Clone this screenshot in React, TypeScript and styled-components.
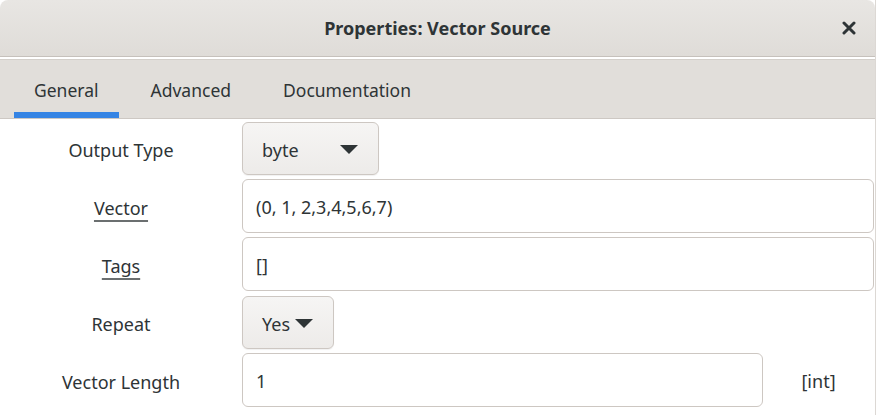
import React from "react";
import styled, { createGlobalStyle } from "styled-components";

const Global = createGlobalStyle`
  html, body { margin: 0; padding: 0; background: #ffffff; }
  body { font-family: "Noto Sans", "Open Sans", sans-serif; color: #2e3436; }
`;

const Window = styled.div`
  width: 875px;
  height: 415px;
  border-right: 1px solid #dcd8d4;
  background: #ffffff;
  display: flex;
  flex-direction: column;
  overflow: hidden;
`;

const TitleBar = styled.div`
  height: 56px;
  flex: none;
  border-radius: 8px 8px 0 0;
  background: linear-gradient(#e8e6e3, #dfdcd8);
  border-bottom: 1px solid #c6c1bc;
  display: flex;
  align-items: center;
  justify-content: center;
  position: relative;
`;

const Title = styled.div`
  font-weight: 700;
  font-size: 18px;
  color: #2e3436;
  padding-bottom: 1px;
`;

const CloseButton = styled.div`
  position: absolute;
  right: 19px;
  top: 21px;
  width: 14px;
  height: 14px;
  display: flex;
`;

const TabBar = styled.div`
  margin-top: 2px;
  height: 58px;
  flex: none;
  background: #e1deda;
  border-top: 1px solid #d3cfca;
  border-bottom: 1px solid #cdc8c3;
  display: flex;
  align-items: stretch;
  padding-left: 14px;
`;

const Tab = styled.div<{ $active?: boolean }>`
  display: flex;
  align-items: center;
  padding: 2px 20px 0;
  margin-right: 12px;
  font-size: 17.5px;
  color: #2e3436;
  box-shadow: ${(p) => (p.$active ? "inset 0 -6px 0 #3584e4" : "none")};
`;

const Content = styled.div`
  padding-top: 2px;
  display: flex;
  flex-direction: column;
  gap: 4px;
`;

const Row = styled.div`
  display: grid;
  grid-template-columns: 242px 1fr;
  height: 54px;
  align-items: center;
`;

const Label = styled.div<{ $underline?: boolean }>`
  text-align: center;
  font-size: 18px;
  padding-top: 3px;
  color: #2e3436;
  text-decoration: ${(p) => (p.$underline ? "underline" : "none")};
  text-decoration-thickness: 2px;
  text-underline-offset: 5px;
  text-decoration-color: #6b6f70;
`;

const Control = styled.div`
  display: flex;
  align-items: center;
  height: 100%;
  padding-right: 1px;
`;

const DropDown = styled.div<{ $width: number; $gap: number }>`
  width: ${(p) => p.$width}px;
  height: 53px;
  margin-top: 1px;
  box-sizing: border-box;
  border: 1px solid #cdc7c2;
  border-radius: 6px;
  background: linear-gradient(#f6f5f4, #edebe9);
  box-shadow: 0 1px 1px rgba(0, 0, 0, 0.06);
  display: flex;
  align-items: center;
  padding-left: 19px;
  padding-top: 2px;
  gap: ${(p) => p.$gap}px;
  font-size: 18px;
  color: #2e3436;
`;

const Entry = styled.div`
  flex: 1;
  height: 54px;
  box-sizing: border-box;
  border: 1px solid #cdc7c2;
  border-radius: 6px;
  background: #ffffff;
  display: flex;
  align-items: center;
  padding-left: 13px;
  padding-top: 2px;
  font-size: 18px;
  color: #2e3436;
`;

const ShortEntry = styled(Entry)`
  flex: none;
  width: 521px;
`;

const Unit = styled.div`
  flex: 1;
  text-align: center;
  font-size: 18px;
  padding-top: 2px;
  color: #2e3436;
`;

const Arrow = () => (
  <svg width="18" height="9" viewBox="0 0 18 9">
    <path d="M0 0 H18 L9 9 Z" fill="#2e3436" />
  </svg>
);

const XIcon = () => (
  <svg width="14" height="14" viewBox="0 0 14 14">
    <path d="M2 2 L12 12 M12 2 L2 12" stroke="#2e3436" strokeWidth="3" strokeLinecap="round" />
  </svg>
);

export default function App() {
  return (
    <>
      <Global />
      <Window>
        <TitleBar>
          <Title>Properties: Vector Source</Title>
          <CloseButton>
            <XIcon />
          </CloseButton>
        </TitleBar>
        <TabBar>
          <Tab $active>General</Tab>
          <Tab>Advanced</Tab>
          <Tab>Documentation</Tab>
        </TabBar>
        <Content>
          <Row>
            <Label>Output Type</Label>
            <Control>
              <DropDown $width={137} $gap={41}>
                byte
                <Arrow />
              </DropDown>
            </Control>
          </Row>
          <Row>
            <Label $underline>Vector</Label>
            <Control>
              <Entry>(0, 1, 2,3,4,5,6,7)</Entry>
            </Control>
          </Row>
          <Row>
            <Label $underline>Tags</Label>
            <Control>
              <Entry>[]</Entry>
            </Control>
          </Row>
          <Row>
            <Label>Repeat</Label>
            <Control>
              <DropDown $width={92} $gap={5}>
                Yes
                <Arrow />
              </DropDown>
            </Control>
          </Row>
          <Row>
            <Label>Vector Length</Label>
            <Control>
              <ShortEntry>1</ShortEntry>
              <Unit>[int]</Unit>
            </Control>
          </Row>
        </Content>
      </Window>
    </>
  );
}
